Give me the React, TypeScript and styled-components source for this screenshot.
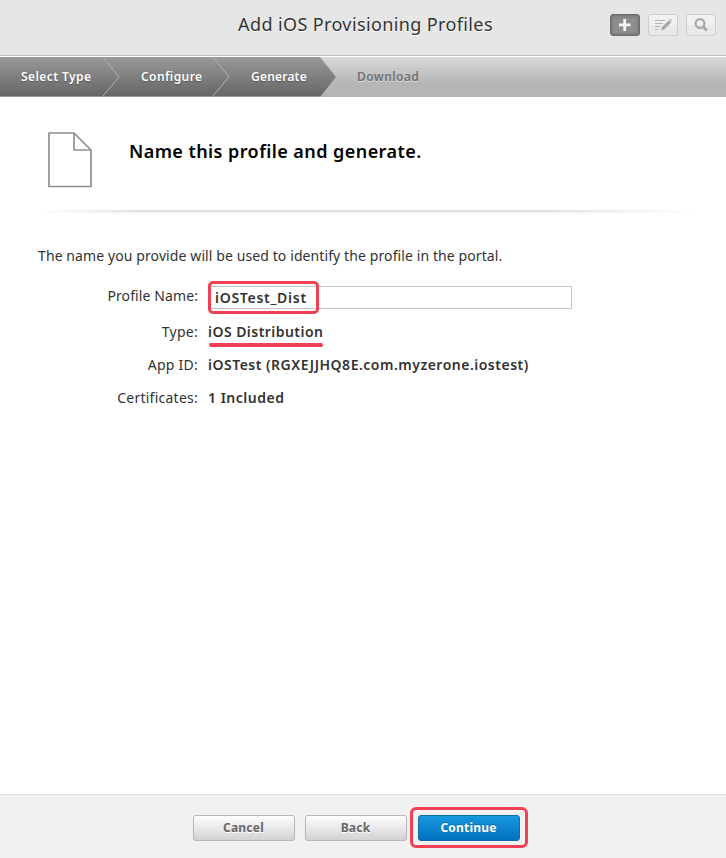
import React from 'react';
import styled, { createGlobalStyle } from 'styled-components';

const GlobalStyle = createGlobalStyle`
  * { box-sizing: border-box; }
  body {
    margin: 0;
    background: #fff;
    color: #333;
    font-family: "Noto Sans", "Open Sans", sans-serif;
  }
`;

const Page = styled.div`
  display: flex;
  flex-direction: column;
  width: 726px;
  height: 858px;
  overflow: hidden;
`;

const Header = styled.header`
  display: grid;
  grid-template-columns: 1fr auto 1fr;
  align-items: center;
  flex: none;
  height: 56px;
  padding: 0 10px 6px 0;
  background: #e6e6e6;
  border-bottom: 1px solid #bdbdbd;
`;

const Title = styled.h1`
  grid-column: 2;
  margin: 0 0 2px 15px;
  font-size: 18px;
  font-weight: 400;
  line-height: 24px;
  letter-spacing: 0.38px;
  white-space: nowrap;
  text-shadow: 0 1px 0 #fff;
`;

const Tools = styled.div`
  display: flex;
  justify-content: flex-end;
  gap: 8px;
`;

const ToolButton = styled.button<{ $active?: boolean }>`
  display: flex;
  align-items: center;
  justify-content: center;
  width: 30px;
  height: 22px;
  padding: 0;
  border: 1px solid ${(p) => (p.$active ? '#6c6c6c' : '#cdcdcd')};
  border-radius: 3px;
  background: ${(p) => (p.$active ? '#8e8e8e' : 'linear-gradient(#f1f1f1 50%, #e9e9e9 50%)')};
  box-shadow: ${(p) => (p.$active ? 'inset 0 0 3px 1px #6e6e6e' : 'none')};
`;

const Steps = styled.ol`
  display: flex;
  flex: none;
  height: 41px;
  margin: 0;
  padding: 0;
  border-top: 1px solid #fff;
  background: linear-gradient(#d9d9d9, #b5b5b5 68%, #b5b5b5);
  list-style: none;
`;

const DoneSteps = styled.div`
  display: flex;
  width: 336px;
  background: linear-gradient(#999, #666 97%, #999 97%);
  clip-path: polygon(0 0, 320px 0, 100% 50%, 320px 100%, 0 100%);
`;

const Step = styled.li<{ $width: number; $upcoming?: boolean; $tracking?: number }>`
  display: flex;
  align-items: center;
  justify-content: space-between;
  width: ${(p) => p.$width}px;
  padding-left: 21px;
  font-size: 12px;
  font-weight: 600;
  letter-spacing: ${(p) => p.$tracking ?? 0.42}px;
  white-space: nowrap;
  color: ${(p) => (p.$upcoming ? '#707070' : '#fff')};
  text-shadow: ${(p) => (p.$upcoming ? '0 1px 0 #dcdcdc' : '0 1px 1px #555')};
`;

const StepName = styled.span`
  padding-bottom: 2px;
`;

const Main = styled.main`
  flex: 1;
  padding: 34px 32px 0 38px;
`;

const Intro = styled.div`
  display: flex;
  gap: 36px;
  height: 79px;
  padding-left: 9px;
`;

const Heading = styled.h2`
  margin: 8px 0 0;
  font-size: 18px;
  font-weight: 600;
  line-height: 24px;
  letter-spacing: 0.43px;
  color: #000;
`;

const Divider = styled.div`
  width: 660px;
  height: 4px;
  background: linear-gradient(#dedede, #e6e6e6 40%, #fff);
  mask-image: linear-gradient(to right, transparent, #000 15%, #000 78%, transparent);
`;

const Description = styled.p`
  margin: 32px 0 0;
  font-size: 14px;
  line-height: 20px;
  letter-spacing: 0.1px;
`;

const Form = styled.dl`
  display: grid;
  grid-template-columns: 160px 1fr;
  grid-template-rows: 36px 33px 33px 33px;
  column-gap: 10px;
  margin: 15px 0 0;
  font-size: 14px;
  line-height: 20px;
`;

const Label = styled.dt<{ $tracking?: number }>`
  padding-top: 5px;
  text-align: right;
  letter-spacing: ${(p) => p.$tracking ?? 0.25}px;
`;

const Value = styled.dd`
  margin: 0;
  padding-top: 5px;
  font-weight: 600;
  letter-spacing: 0.5px;
`;

const FieldCell = styled.dd`
  position: relative;
  display: flex;
  align-items: flex-start;
  margin: 0 0 0 1px;
`;

const NameInput = styled.input`
  width: 363px;
  height: 23px;
  margin-top: 5px;
  padding: 0 0 0 5px;
  border: 1px solid #c6c6c6;
  background: #fff;
  color: #333;
  font: 600 14px "Noto Sans", sans-serif;
  letter-spacing: 0.72px;
  outline: none;
`;

const FieldHighlight = styled.span`
  position: absolute;
  top: 0;
  left: -1px;
  width: 111px;
  height: 33px;
  border: 3px solid #ef4056;
  border-radius: 5px;
  pointer-events: none;
`;

const Underlined = styled.span`
  position: relative;
  letter-spacing: 0.46px;

  &::after {
    content: '';
    position: absolute;
    left: 1px;
    bottom: -6px;
    width: 114px;
    height: 4px;
    border-radius: 2px;
    background: #ef4056;
  }
`;

const Footer = styled.footer`
  display: flex;
  align-items: flex-start;
  flex: none;
  gap: 10px;
  height: 64px;
  padding: 20px 0 0 193px;
  border-top: 1px solid #dedede;
  background: #f1f1f1;
`;

const Button = styled.button<{ $primary?: boolean }>`
  flex: none;
  width: 102px;
  height: 26px;
  padding: 0 1px 1px 0;
  border: 1px solid ${(p) => (p.$primary ? '#0d6db0' : '#b5b5b5')};
  border-radius: 3px;
  background: ${(p) => (p.$primary ? 'linear-gradient(#1899df, #0070bd)' : 'linear-gradient(#fff, #d2d2d2)')};
  color: ${(p) => (p.$primary ? '#fff' : '#666')};
  font: 700 12px "Noto Sans", sans-serif;
  letter-spacing: 0.2px;
  text-shadow: ${(p) => (p.$primary ? '0 -1px 0 #0869a8' : '0 1px 0 #fff')};
`;

const ContinueFrame = styled.div`
  width: 118px;
  height: 41px;
  margin: -8px 0 0 -7px;
  padding: 5px 0 0 5px;
  border: 3px solid #ef4056;
  border-radius: 6px;
`;

const Chevron = () => (
  <svg width="18" height="40" viewBox="0 0 18 40" fill="none">
    <path d="M1 0 17 20 1 39" stroke="#b0b0b0" strokeWidth="1" />
  </svg>
);

const PlusIcon = () => (
  <svg width="16" height="16" viewBox="0 0 16 16">
    <path d="M7 3h3v4h4v3h-4v4H7v-4H3V7h4z" fill="#666" />
    <path d="M6.3 2h3v4.500h4.400v3H9.300V14h-3V9.500H2v-3h4.300z" fill="#f5f5f5" />
  </svg>
);

const EditIcon = () => (
  <svg width="18" height="14" viewBox="0 0 18 14">
    <path d="M1 2.500h10M1 5.500h8M1 8.500h5M1 11.500h3" stroke="#b5b5b5" />
    <path d="M7.300 12.500 8.200 9 15 2.200l2.300 2.100-6.800 7z" fill="#a6a6a6" />
    <path d="m15.600 1.600.9-.8 1.400 1.400-.7 1z" fill="#a6a6a6" />
  </svg>
);

const SearchIcon = () => (
  <svg width="16" height="16" viewBox="0 0 16 16" fill="none" stroke="#a9a9a9">
    <circle cx="7" cy="6.500" r="4.400" strokeWidth="2.200" />
    <path d="m10 9.700 4 3.800" strokeWidth="2.700" />
  </svg>
);

const DocumentIcon = () => (
  <svg width="46" height="57" viewBox="0 0 46 57" fill="none" stroke="#8f8f8f" strokeWidth="1.700" strokeLinejoin="round">
    <path d="M2 2h25l17 17v36.500H2z" />
    <path d="M27 2v17h17" />
  </svg>
);

export default function App() {
  return (
    <Page>
      <GlobalStyle />
      <Header>
        <Title>Add iOS Provisioning Profiles</Title>
        <Tools>
          <ToolButton $active aria-label="Add"><PlusIcon /></ToolButton>
          <ToolButton aria-label="Edit"><EditIcon /></ToolButton>
          <ToolButton aria-label="Search"><SearchIcon /></ToolButton>
        </Tools>
      </Header>
      <Steps>
        <DoneSteps>
          <Step $width={120}><StepName>Select Type</StepName><Chevron /></Step>
          <Step $width={110}><StepName>Configure</StepName><Chevron /></Step>
          <Step $width={106} $tracking={0.2}><StepName>Generate</StepName></Step>
        </DoneSteps>
        <Step $width={120} $upcoming><StepName>Download</StepName></Step>
      </Steps>
      <Main>
        <Intro>
          <DocumentIcon />
          <Heading>Name this profile and generate.</Heading>
        </Intro>
        <Divider />
        <Description>The name you provide will be used to identify the profile in the portal.</Description>
        <Form>
          <Label $tracking={0.1}>Profile Name:</Label>
          <FieldCell>
            <NameInput defaultValue="iOSTest_Dist" aria-label="Profile Name" />
            <FieldHighlight />
          </FieldCell>
          <Label>Type:</Label>
          <Value><Underlined>iOS Distribution</Underlined></Value>
          <Label>App ID:</Label>
          <Value>iOSTest (RGXEJJHQ8E.com.myzerone.iostest)</Value>
          <Label>Certificates:</Label>
          <Value>1 Included</Value>
        </Form>
      </Main>
      <Footer>
        <Button>Cancel</Button>
        <Button>Back</Button>
        <ContinueFrame><Button $primary>Continue</Button></ContinueFrame>
      </Footer>
    </Page>
  );
}
